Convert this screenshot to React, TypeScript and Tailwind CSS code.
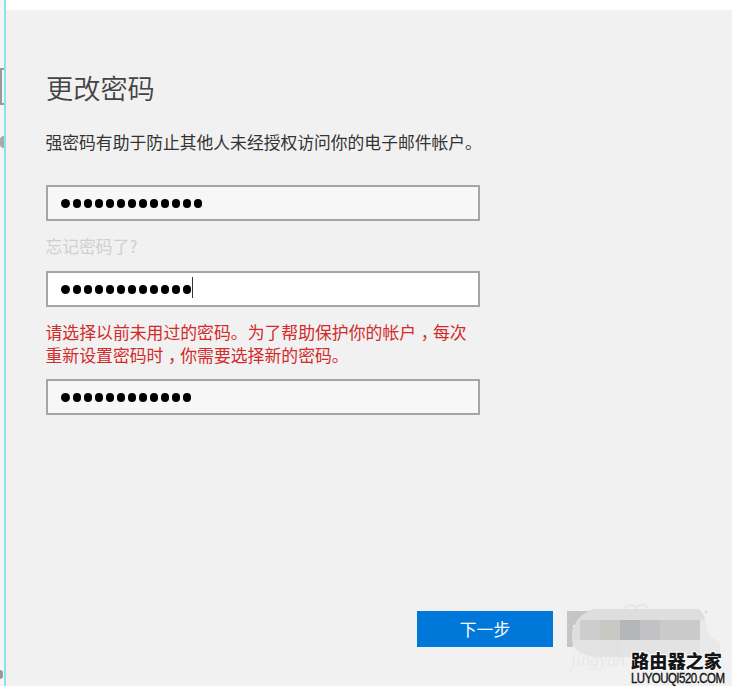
import React from "react";

function Comma() {
  return <span className="ml-[4.6px] mr-[3.8px] [font-feature-settings:'halt']">，</span>;
}

type FieldProps = { count: number; focused?: boolean };

function PasswordField({ count, focused = false }: FieldProps) {
  return (
    <div
      className={`flex h-9 w-[434px] items-center border-2 border-[#a5a5a5] pl-[13px] ${
        focused ? "bg-white" : "bg-[#f7f7f7]"
      }`}
    >
      <div className="flex gap-[2px]">
        {Array.from({ length: count }, (_, i) => (
          <span key={i} className="flex w-[9.07px] justify-center">
            <span className="h-[9px] w-[8.2px] rounded-full bg-black" />
          </span>
        ))}
      </div>
      {focused && <span className="-mt-1 h-[21px] w-px bg-[#333]" />}
    </div>
  );
}

function Mosaic() {
  return (
    <svg className="absolute left-[560px] top-[600px]" width="172" height="75" viewBox="0 0 172 75">
      <path d="M65 10q0-5 6-5 5 0 5 6 0-6 6-6 6 0 6 6" fill="none" stroke="#e6e6e6" strokeWidth="2" />
      <clipPath id="blob">
        <path d="M34 9h103q6 1 8 11h-5v37H40Q14 57 12 40V31Q18 13 34 9Z" />
      </clipPath>
      <path d="M140 20h5q3 10 4 16l11 6v17h-20Z" fill="#e9e9e9" />
      <path d="M144 10l3 2v2Z" fill="#c9c9c9" />
      <g clipPath="url(#blob)">
        <rect width="172" height="20" fill="#dedede" />
        <rect y="20" width="172" height="20" fill="#dddddd" />
        <rect y="40" width="172" height="20" fill="#e3e3e3" />
        <rect x="20" y="20" width="20" height="20" fill="#cdcdcd" />
        <rect x="40" y="20" width="20" height="20" fill="#c8c8c5" />
        <rect x="60" y="20" width="20" height="20" fill="#b5b6b8" />
        <rect x="80" y="20" width="20" height="20" fill="#c2c2c4" />
        <rect x="100" y="20" width="40" height="20" fill="#cacaca" />
        <rect x="40" y="40" width="20" height="20" fill="#e1e1e1" />
      </g>
    </svg>
  );
}

export default function App() {
  return (
    <div className="relative flex h-[692px] w-[732px] overflow-hidden bg-white font-['Noto_Sans_CJK_SC',sans-serif]">
      <div className="flex h-[686px] w-1 flex-col overflow-hidden bg-[#f5f5f5]">
        <div className="mt-[68px] h-[37px] w-2 border-2 border-[#999]" />
        <div className="mt-[31px] h-[12px] w-1 rounded-l-full bg-[#aaa]" />
        <div className="mt-[522px] h-[9px] w-[3px] rounded-r-full bg-[#999]" />
      </div>
      <div className="h-[686px] w-[2px] bg-[#8be4e6]" />
      <main className="mt-[10px] flex h-[676px] flex-1 flex-col bg-[#f1f1f1] pl-10">
        <h1 className="mt-[57px] h-10 text-[27.2px] font-[350] leading-10 text-[#444]">更改密码</h1>
        <p className="-ml-[0.5px] mt-[23px] h-6 whitespace-nowrap text-[16.8px] leading-6 text-[#333]">
          强密码有助于防止其他人未经授权访问你的电子邮件帐户。
        </p>
        <div className="mt-[31px]">
          <PasswordField count={13} />
        </div>
        <a className="-ml-[0.5px] mt-[13px] h-6 text-[16.8px] leading-6 text-[#cfcfcf]">忘记密码了?</a>
        <div className="mt-[13px]">
          <PasswordField count={12} focused />
        </div>
        <p className="-ml-[0.5px] mt-[13px] h-[46px] whitespace-nowrap text-[16.85px] leading-[23px] text-[#d22b2b]">
          请选择以前未用过的密码。为了帮助保护你的帐户<Comma />每次
          <br />
          重新设置密码时<Comma />你需要选择新的密码。
        </p>
        <div className="mt-[13px]">
          <PasswordField count={12} />
        </div>
        <div className="mt-[196px] flex gap-[14px] pl-[371px]">
          <button className="h-[36px] w-[136px] bg-[#0078d9] text-[16.8px] leading-[34px] text-white">下一步</button>
          <div className="flex h-[36px] w-[26px] items-end justify-end bg-[#c5c5c5]">
            <span className="h-[22px] w-[20px] bg-[#efefef]" />
          </div>
        </div>
      </main>
      <span className="absolute left-[571px] top-[650px] font-['Liberation_Serif',serif] text-[18px] italic leading-5 text-[#e8e8e8]">
        jingyan
      </span>
      <Mosaic />
      <div className="absolute left-[631px] top-[647px] flex w-[100px] flex-col whitespace-nowrap text-[#151515]">
        <span className="h-6 text-[18.2px] font-black leading-[26px] [paint-order:stroke_fill] [-webkit-text-stroke:2px_#fff]">
          路由器之家
        </span>
        <span className="h-4 w-[120px] origin-left scale-x-[0.83] font-['Liberation_Sans',Arial,sans-serif] text-[13.8px] leading-4 tracking-[-0.6px] [-webkit-text-stroke:0.4px_#151515]">
          LUYOUQI520.COM
        </span>
      </div>
    </div>
  );
}
